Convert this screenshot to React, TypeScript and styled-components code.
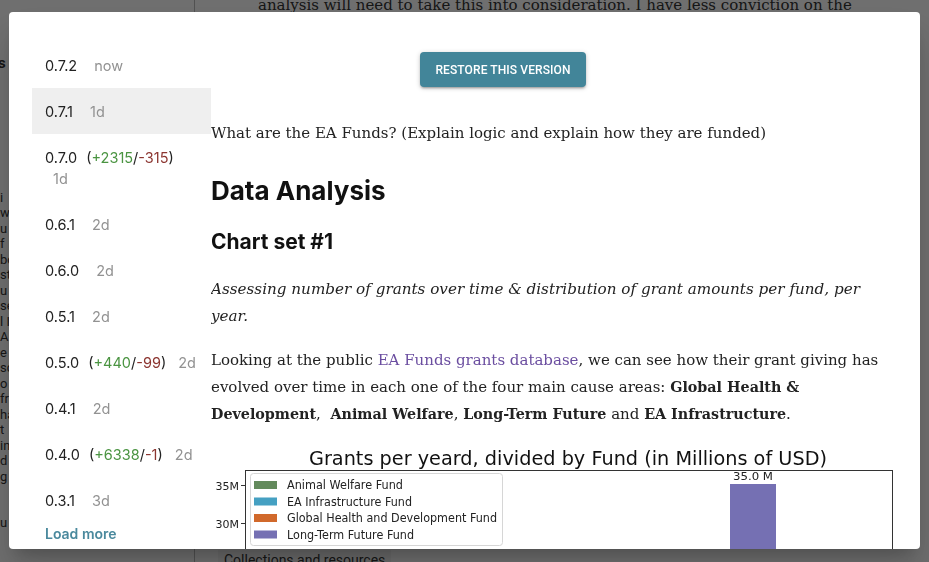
import React from "react";
import styled, { createGlobalStyle } from "styled-components";

const Global = createGlobalStyle`
  html, body { margin: 0; padding: 0; width: 929px; height: 562px; overflow: hidden; background: #fff; }
  * { box-sizing: border-box; }
  #root { width: 929px; height: 562px; }
`;

/* ---------- page behind the dialog ---------- */
const Page = styled.div`
  width: 929px;
  height: 562px;
  display: flex;
  background: #fff;
  color: #333;
  overflow: hidden;
`;
const LeftColumn = styled.div`
  width: 195px;
  flex-shrink: 0;
  border-right: 1px solid #bbb;
  padding-top: 56px;
  font-family: Roboto, "Liberation Sans", sans-serif;
  font-size: 13px;
  line-height: 15.5px;
  overflow: hidden;
`;
const LeftHeading = styled.div`
  font-weight: 700;
  font-size: 15px;
  margin-left: -2px;
  margin-bottom: 118px;
`;
const LeftLine = styled.div`
  white-space: nowrap;
  color: #333;
`;
const MainColumn = styled.div`
  flex: 1;
  display: flex;
  flex-direction: column;
  justify-content: space-between;
  padding-left: 63px;
`;
const TopText = styled.div`
  font-family: "DejaVu Serif", serif;
  font-size: 15px;
  margin-top: -4px;
  white-space: nowrap;
`;
const BottomText = styled.div`
  font-family: Roboto, "Liberation Sans", sans-serif;
  font-size: 14px;
  margin-left: -40px;
  margin-bottom: -8px;
  padding: 2px 6px;
  background: #f3f3f3;
  width: max-content;
`;
const Overlay = styled.div`
  position: fixed;
  inset: 0;
  background: rgba(0, 0, 0, 0.565);
`;

/* ---------- dialog ---------- */
const Modal = styled.div`
  position: fixed;
  left: 9px;
  top: 12px;
  width: 911px;
  height: 537px;
  background: #fff;
  border-radius: 4px;
  box-shadow: 0 11px 15px -7px rgba(0, 0, 0, 0.2), 0 24px 38px 3px rgba(0, 0, 0, 0.14);
  display: flex;
  overflow: hidden;
  padding-left: 23px;
`;
const Sidebar = styled.div`
  width: 179px;
  flex-shrink: 0;
  padding-top: 30px;
  font-family: Inter, Roboto, "Liberation Sans", sans-serif;
  font-size: 14.5px;
`;
const Row = styled.div<{ $selected?: boolean }>`
  padding: 12.5px 12px 12.5px 13px;
  line-height: 21px;
  color: #222;
  background: ${(p) => (p.$selected ? "#efefef" : "transparent")};
`;
const Version = styled.span`
  margin-right: 5px;
`;
const Changes = styled.span``;
const Added = styled.span`
  color: #4a9441;
`;
const Removed = styled.span`
  color: #8c3530;
`;
const DateLabel = styled.span`
  display: inline-block;
  margin-left: 8px;
  color: #929292;
`;
const LoadMore = styled.div`
  padding: 1px 13px;
  font-size: 14px;
  font-weight: 600;
  color: #4a899d;
  line-height: 20px;
`;

const Content = styled.div`
  flex: 1;
  padding: 40px 29px 0 0;
  overflow: hidden;
`;
const ButtonRow = styled.div`
  display: flex;
  justify-content: center;
  padding-right: 96px;
`;
const RestoreButton = styled.button`
  width: 166px;
  height: 35px;
  border: none;
  border-radius: 4px;
  background: #428599;
  color: #fff;
  font-family: Roboto, "Liberation Sans", sans-serif;
  font-size: 12px;
  font-weight: 500;
  letter-spacing: 0.1px;
  text-transform: uppercase;
  box-shadow: 0 1px 5px rgba(0, 0, 0, 0.2), 0 2px 2px rgba(0, 0, 0, 0.14), 0 3px 1px -2px rgba(0, 0, 0, 0.12);
`;
const Body = styled.p<{ $top: number; $italic?: boolean }>`
  margin: ${(p) => p.$top}px 0 0;
  font-family: "DejaVu Serif", serif;
  font-size: ${(p) => (p.$italic ? 15.2 : 15)}px;
  line-height: 27px;
  color: #222;
  font-style: ${(p) => (p.$italic ? "italic" : "normal")};
`;
const Link = styled.span`
  color: #6b4ea0;
`;
const Strong = styled.b`
  font-weight: 700;
  font-size: 14.3px;
`;
const Heading = styled.h1<{ $size: number; $top: number; $lh: number }>`
  margin: ${(p) => p.$top}px 0 0;
  font-family: Inter, Roboto, sans-serif;
  font-weight: 700;
  font-size: ${(p) => p.$size}px;
  line-height: ${(p) => p.$lh}px;
  color: #111;
`;
const ChartWrap = styled.div`
  margin-top: 12.5px;
  width: 690px;
`;

type Ver = { v: string; d: string; add?: number; rem?: number; sel?: boolean };
const versions: Ver[] = [
  { v: "0.7.2", d: "now" },
  { v: "0.7.1", d: "1d", sel: true },
  { v: "0.7.0", d: "1d", add: 2315, rem: 315 },
  { v: "0.6.1", d: "2d" },
  { v: "0.6.0", d: "2d" },
  { v: "0.5.1", d: "2d" },
  { v: "0.5.0", d: "2d", add: 440, rem: 99 },
  { v: "0.4.1", d: "2d" },
  { v: "0.4.0", d: "2d", add: 6338, rem: 1 },
  { v: "0.3.1", d: "3d" },
];

const legend = [
  { label: "Animal Welfare Fund", color: "#638a5c", w: 116 },
  { label: "EA Infrastructure Fund", color: "#45a0c2", w: 125 },
  { label: "Global Health and Development Fund", color: "#d1692b", w: 210 },
  { label: "Long-Term Future Fund", color: "#7570b3", w: 127 },
];

const Chart = () => (
  <svg width="690" height="110" viewBox="0 0 690 110" style={{ display: "block" }}>
    <text x="357" y="24" textAnchor="middle" fontFamily="DejaVu Sans, sans-serif" fontSize="19" fill="#111" textLength="518" lengthAdjust="spacingAndGlyphs">
      Grants per yeard, divided by Fund (in Millions of USD)
    </text>
    <rect x="34.5" y="29.5" width="647" height="120" fill="#fff" stroke="#333" strokeWidth="1" />
    <line x1="30" y1="44.5" x2="34" y2="44.5" stroke="#333" />
    <line x1="30" y1="82.5" x2="34" y2="82.5" stroke="#333" />
    <text x="28" y="48.5" textAnchor="end" fontFamily="DejaVu Sans, sans-serif" fontSize="11" fill="#222">35M</text>
    <text x="28" y="86.5" textAnchor="end" fontFamily="DejaVu Sans, sans-serif" fontSize="11" fill="#222">30M</text>
    <rect x="519" y="43" width="46" height="100" fill="#7570b3" />
    <text x="542" y="39" textAnchor="middle" fontFamily="DejaVu Sans, sans-serif" fontSize="11" fill="#222" textLength="40" lengthAdjust="spacingAndGlyphs">35.0 M</text>
    <rect x="39.5" y="32.5" width="252" height="72" rx="3" fill="#fff" fillOpacity="0.85" stroke="#d6d6d6" />
    {legend.map((l, i) => (
      <g key={l.label}>
        <rect x="43" y={40 + i * 16.5} width="23" height="8" fill={l.color} />
        <text x="76" y={48 + i * 16.5} fontFamily="DejaVu Sans, sans-serif" fontSize="11.5" fill="#222" textLength={l.w} lengthAdjust="spacingAndGlyphs">
          {l.label}
        </text>
      </g>
    ))}
  </svg>
);

const leftLines = ["i", "w", "u", "f", "bo", "st", "u", "se", "l I", "A", "e", "sc", "o", "fr", "ha", " t", "in", "d", "g", "", "", "u"];

export default function App() {
  return (
    <>
      <Global />
      <Page>
        <LeftColumn>
          <LeftHeading>s</LeftHeading>
          {leftLines.map((l, i) => (
            <LeftLine key={i}>{l || "\u00a0"}</LeftLine>
          ))}
        </LeftColumn>
        <MainColumn>
          <TopText>analysis will need to take this into consideration. I have less conviction on the</TopText>
          <BottomText>Collections and resources</BottomText>
        </MainColumn>
      </Page>
      <Overlay />
      <Modal>
        <Sidebar>
          {versions.map((r) => (
            <Row key={r.v} $selected={r.sel}>
              <Version>{r.v}</Version>
              {r.add !== undefined && (
                <>
                  {" "}
                  <Changes>
                    (<Added>+{r.add}</Added>/<Removed>-{r.rem}</Removed>)
                  </Changes>
                </>
              )}{" "}
              <DateLabel>{r.d}</DateLabel>
            </Row>
          ))}
          <LoadMore>Load more</LoadMore>
        </Sidebar>
        <Content>
          <ButtonRow>
            <RestoreButton>Restore this version</RestoreButton>
          </ButtonRow>
          <Body $top={33}>What are the EA Funds? (Explain logic and explain how they are funded)</Body>
          <Heading as="h2" $size={26} $lh={32} $top={27.5}>Data Analysis</Heading>
          <Heading as="h3" $size={21} $lh={26} $top={22}>Chart set #1</Heading>
          <Body $top={21.5} $italic>
            Assessing number of grants over time &amp; distribution of grant amounts per fund, per year.
          </Body>
          <Body $top={17}>
            Looking at the public <Link>EA Funds grants database</Link>, we can see how their grant giving has evolved over time in each one of the four main cause areas: <Strong>Global Health &amp; Development</Strong>,{"\u00a0"} <Strong>Animal Welfare</Strong>, <Strong>Long-Term Future</Strong> and <Strong>EA Infrastructure</Strong>.
          </Body>
          <ChartWrap>
            <Chart />
          </ChartWrap>
        </Content>
      </Modal>
    </>
  );
}
